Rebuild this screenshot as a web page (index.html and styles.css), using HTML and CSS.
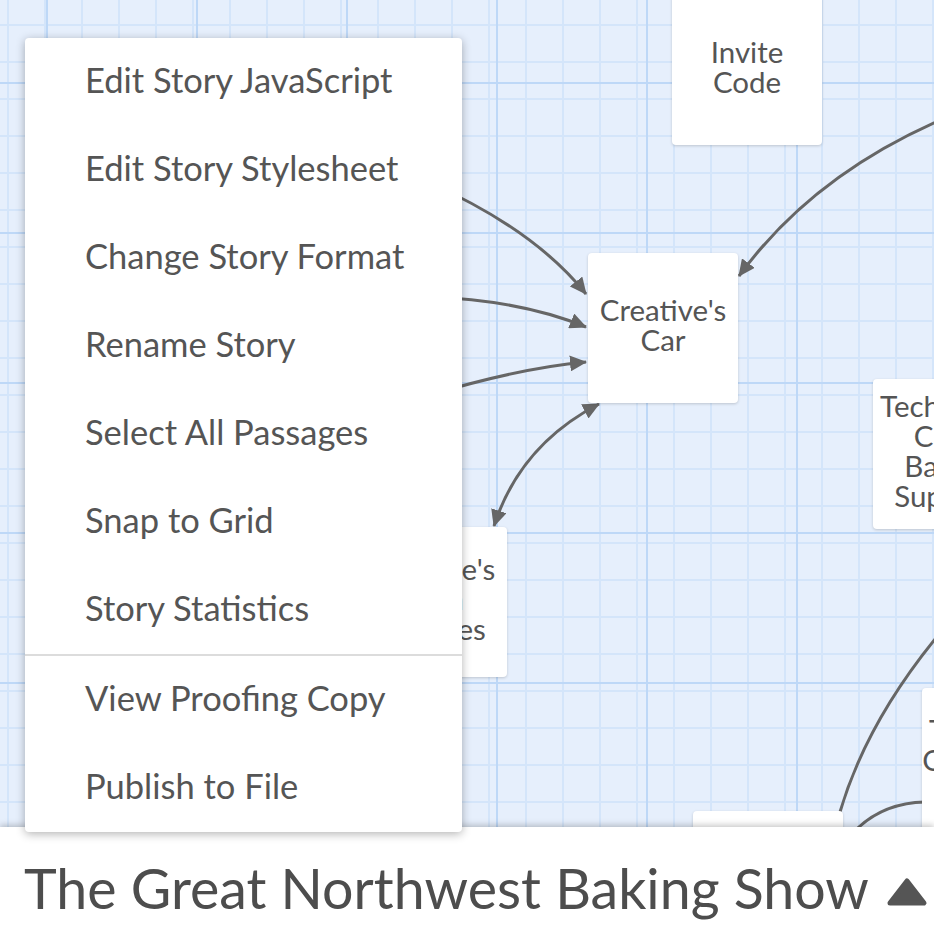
FILE: index.html
```html
<!DOCTYPE html>
<html>
<head>
<meta charset="utf-8">
<link rel="stylesheet" href="styles.css">
</head>
<body>
<div class="app">
  <div class="canvas">
    <svg class="links" width="934" height="827" viewBox="0 0 934 827">
      <defs>
        <marker id="arrow" markerUnits="userSpaceOnUse" markerWidth="18" markerHeight="16" refX="16" refY="8" orient="auto-start-reverse">
          <path d="M0 0 L17 8 L0 16 Z" fill="#666"/>
        </marker>
      </defs>
      <path d="M430 183 Q 535 230 586 294" marker-end="url(#arrow)"/>
      <path d="M430 297 Q 520 300 586 327" marker-end="url(#arrow)"/>
      <path d="M430 395 Q 520 368 586 362" marker-end="url(#arrow)"/>
      <path d="M599 404 Q 520 445 494 526" marker-start="url(#arrow)" marker-end="url(#arrow)"/>
      <path d="M970 108 Q 820 165 739 276" marker-end="url(#arrow)"/>
      <path d="M960 610 Q 870 710 840 812"/>
      <path d="M852 834 Q 880 803 925 802"/>
    </svg>
    <div class="passage" style="left:672px;top:-5px">Invite<br>Code</div>
    <div class="passage" style="left:588px;top:253px">Creative's<br>Car</div>
    <div class="passage" style="left:873px;top:379px">Technician<br>Crew<br>Baking<br>Supplies</div>
    <div class="passage" style="left:357px;top:527px">Creative's<br>Own<br>Supplies</div>
    <div class="passage" style="left:922px;top:688px">Technician<br>Countertop<br>Oven</div>
    <div class="passage" style="left:693px;top:811px"></div>
  </div>
  <div class="toolbar">
    <h1 class="story-title">The Great Northwest Baking Show</h1>
    <svg class="caret" width="42" height="30" viewBox="0 0 42 30"><path d="M21 4 L38 26 L4 26 Z" fill="#555" stroke="#555" stroke-width="5" stroke-linejoin="round"/></svg>
  </div>
  <ul class="menu">
    <li class="menu-item">Edit Story JavaScript</li>
    <li class="menu-item">Edit Story Stylesheet</li>
    <li class="menu-item">Change Story Format</li>
    <li class="menu-item">Rename Story</li>
    <li class="menu-item">Select All Passages</li>
    <li class="menu-item">Snap to Grid</li>
    <li class="menu-item">Story Statistics</li>
    <li class="menu-sep"></li>
    <li class="menu-item">View Proofing Copy</li>
    <li class="menu-item">Publish to File</li>
  </ul>
</div>
</body>
</html>
```

FILE: styles.css
```css
* { box-sizing: border-box; }
html, body { margin: 0; padding: 0; }
body {
  width: 934px;
  height: 937px;
  overflow: hidden;
  font-family: "Lato", "Liberation Sans", sans-serif;
  color: #555;
  background: #fff;
}
.app {
  position: relative;
  width: 934px;
  height: 937px;
  display: flex;
  flex-direction: column;
}
.canvas {
  position: relative;
  height: 827px;
  flex: none;
  overflow: hidden;
  background-color: #e6effc;
  background-image:
    linear-gradient(to right, #bed8f7 2px, transparent 2px),
    linear-gradient(to bottom, #bed8f7 2px, transparent 2px),
    linear-gradient(to right, #d4e5fa 2px, transparent 2px),
    linear-gradient(to bottom, #d4e5fa 2px, transparent 2px);
  background-size: 150px 150px, 150px 150px, 37px 37px, 37px 37px;
  background-position: 46px 82px, 46px 82px, 7px 24px, 7px 24px;
}
.links {
  position: absolute;
  left: 0;
  top: 0;
}
.links path {
  fill: none;
  stroke: #666;
  stroke-width: 3;
}
.links marker path { stroke: none; fill: #666; }
.passage {
  position: absolute;
  width: 150px;
  height: 150px;
  background: #fff;
  border-radius: 4px;
  box-shadow: 0 1px 3px rgba(0,0,0,0.18);
  display: flex;
  align-items: center;
  justify-content: center;
  text-align: center;
  font-size: 29.5px;
  line-height: 30px;
  padding: 0 0 7px;
  overflow: hidden;
  white-space: nowrap;
}
.toolbar {
  position: relative;
  z-index: 1;
  height: 110px;
  flex: none;
  background: #fff;
  box-shadow: 0 -2px 6px rgba(0,0,0,0.22);
  display: flex;
  align-items: center;
  padding: 12px 0 0 24px;
  gap: 17px;
}
.story-title {
  margin: 0;
  font-weight: 400;
  font-size: 55.5px;
  line-height: 60px;
  color: #4d4d4d;
  white-space: nowrap;
}
.caret { flex: none; margin-top: 8px; }
.menu {
  position: absolute;
  z-index: 2;
  left: 25px;
  top: 38px;
  width: 437px;
  margin: 0;
  padding: 0;
  list-style: none;
  background: #fff;
  border-radius: 4px;
  box-shadow: 0 2px 10px rgba(0,0,0,0.3);
}
.menu-item {
  height: 88px;
  display: flex;
  align-items: center;
  padding: 0 0 6px 60px;
  font-size: 34.5px;
  color: #555;
  white-space: nowrap;
}
.menu-sep {
  height: 2px;
  background: #dcdcdc;
}
```
